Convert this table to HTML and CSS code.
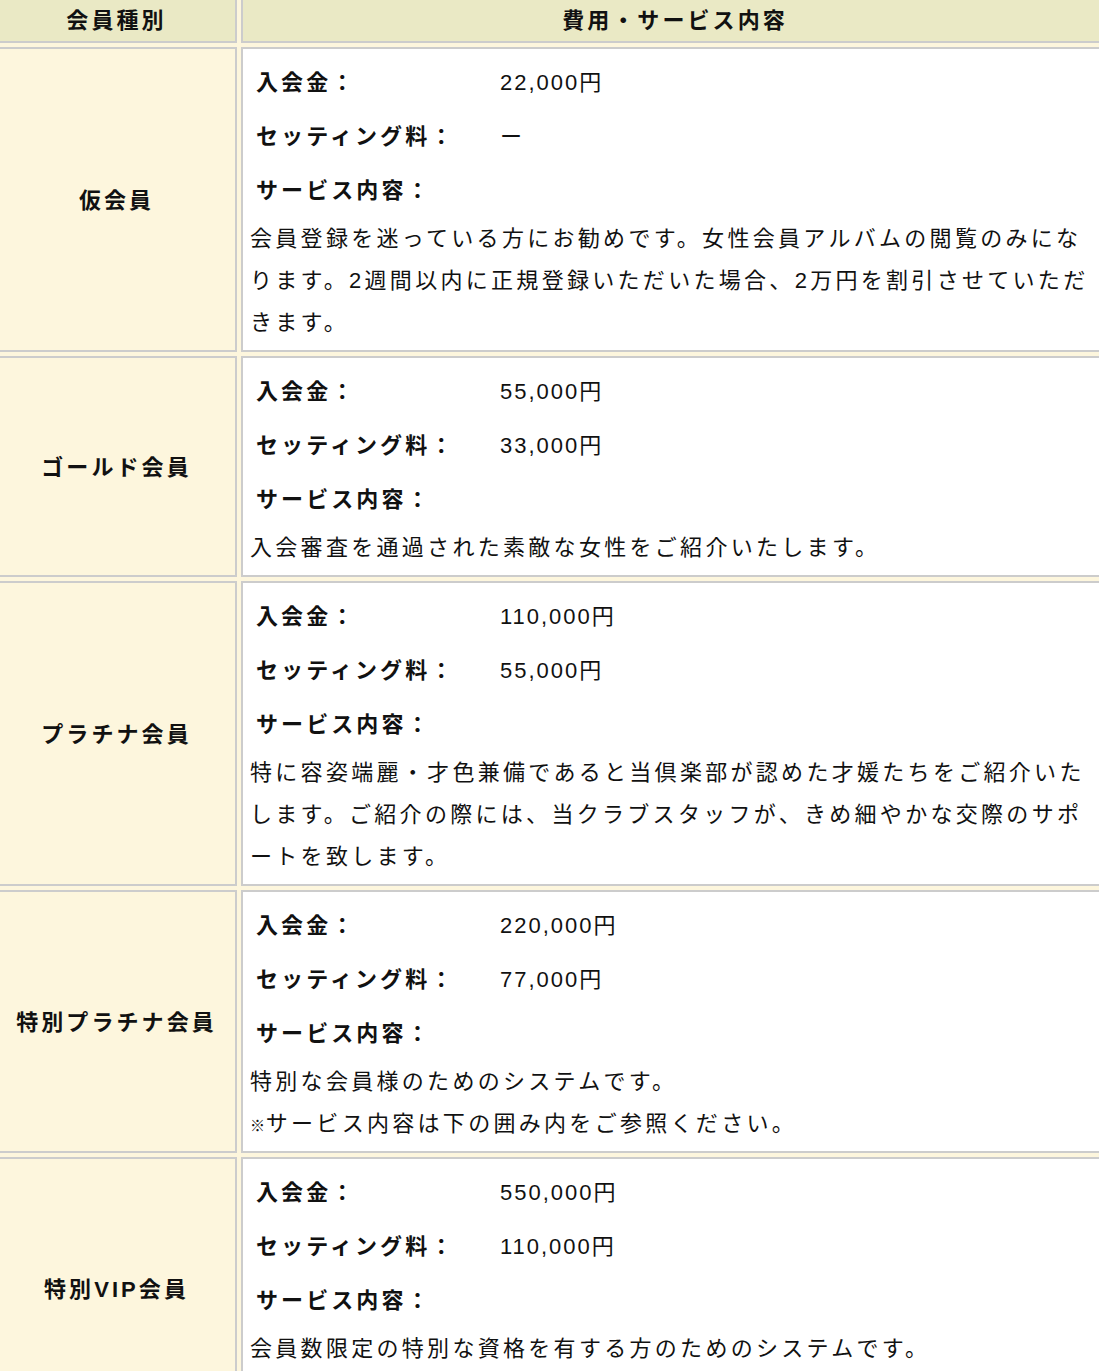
FILE: index.html
```html
<!DOCTYPE html>
<html lang="ja">
<head>
<meta charset="utf-8">
<title>会員種別</title>
<link rel="stylesheet" href="styles.css">
</head>
<body>
<table class="plans">
  <thead>
    <tr>
      <th class="col-type">会員種別</th>
      <th class="col-detail">費用・サービス内容</th>
    </tr>
  </thead>
  <tbody>
    <tr>
      <th class="type">仮会員</th>
      <td class="detail">
        <dl class="fees">
          <dt>入会金：</dt><dd>22,000円</dd>
          <dt>セッティング料：</dt><dd>ー</dd>
          <dt>サービス内容：</dt><dd></dd>
        </dl>
        <p class="desc">会員登録を迷っている方にお勧めです。女性会員アルバムの閲覧のみになります。2週間以内に正規登録いただいた場合、2万円を割引させていただきます。</p>
      </td>
    </tr>
    <tr>
      <th class="type">ゴールド会員</th>
      <td class="detail">
        <dl class="fees">
          <dt>入会金：</dt><dd>55,000円</dd>
          <dt>セッティング料：</dt><dd>33,000円</dd>
          <dt>サービス内容：</dt><dd></dd>
        </dl>
        <p class="desc">入会審査を通過された素敵な女性をご紹介いたします。</p>
      </td>
    </tr>
    <tr>
      <th class="type">プラチナ会員</th>
      <td class="detail">
        <dl class="fees">
          <dt>入会金：</dt><dd>110,000円</dd>
          <dt>セッティング料：</dt><dd>55,000円</dd>
          <dt>サービス内容：</dt><dd></dd>
        </dl>
        <p class="desc">特に容姿端麗・才色兼備であると当倶楽部が認めた才媛たちをご紹介いたします。ご紹介の際には、当クラブスタッフが、きめ細やかな交際のサポートを致します。</p>
      </td>
    </tr>
    <tr>
      <th class="type">特別プラチナ会員</th>
      <td class="detail">
        <dl class="fees">
          <dt>入会金：</dt><dd>220,000円</dd>
          <dt>セッティング料：</dt><dd>77,000円</dd>
          <dt>サービス内容：</dt><dd></dd>
        </dl>
        <p class="desc">特別な会員様のためのシステムです。<br><span class="note">※</span>サービス内容は下の囲み内をご参照ください。</p>
      </td>
    </tr>
    <tr>
      <th class="type">特別VIP会員</th>
      <td class="detail detail-tall">
        <dl class="fees">
          <dt>入会金：</dt><dd>550,000円</dd>
          <dt>セッティング料：</dt><dd>110,000円</dd>
          <dt>サービス内容：</dt><dd></dd>
        </dl>
        <p class="desc">会員数限定の特別な資格を有する方のためのシステムです。</p>
      </td>
    </tr>
  </tbody>
</table>
</body>
</html>
```
FILE: styles.css
```css
html, body {
  margin: 0;
  padding: 0;
  overflow: hidden;
  background: #ffffff;
}

body {
  font-family: "Liberation Sans", "Noto Sans CJK JP", sans-serif;
  color: #111111;
}

.plans {
  border-collapse: separate;
  border-spacing: 4px;
  background: #fdf6dd;
  width: 1121px;
  margin: -7px 0 0 -8px;
  table-layout: fixed;
}

.plans th,
.plans td {
  border: 2px solid #cccccc;
}

.col-type {
  width: 237px;
}

.plans thead th {
  background: #eae9c5;
  font-size: 22px;
  font-weight: bold;
  line-height: 30px;
  padding: 7px 0 5px;
  letter-spacing: 0.14em;
  text-align: center;
}

.type {
  background: #fdf6dd;
  font-size: 22px;
  font-weight: bold;
  letter-spacing: 0.14em;
  text-align: center;
  vertical-align: middle;
  padding: 0 0 3px;
}

.detail {
  background: #ffffff;
  padding: 7px 7px 6px 7px;
  vertical-align: top;
}

.detail-tall {
  padding-bottom: 48px;
}

.fees {
  display: grid;
  grid-template-columns: 250px 1fr;
  margin: 0;
}

.fees dt,
.fees dd {
  margin: 0;
  height: 54px;
  line-height: 54px;
  font-size: 22px;
}

.fees dt {
  font-weight: bold;
  padding-left: 6px;
  letter-spacing: 0.14em;
}

.fees dd {
  letter-spacing: 0.09em;
}

.desc {
  margin: 0;
  font-size: 22px;
  line-height: 42px;
  letter-spacing: 0.15em;
}

.note {
  font-size: 15px;
  line-height: 0;
  letter-spacing: 0.05em;
}
```
